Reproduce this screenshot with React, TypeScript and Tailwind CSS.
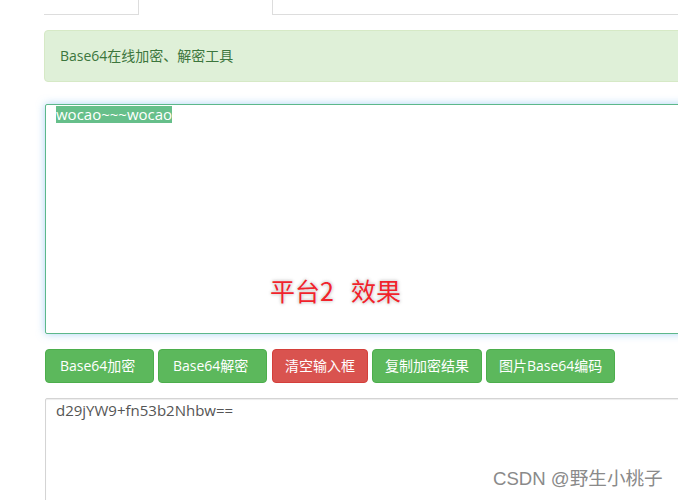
import React from "react";

const font = "font-['Open_Sans','Noto_Sans_CJK_SC',sans-serif]";

export default function App() {
  return (
    <div className={`relative w-[678px] h-[500px] overflow-hidden bg-white ${font}`}>
      <div className="w-[760px] pl-[44px]">
        {/* tabs */}
        <div className="flex h-[15px]">
          <div className="w-[95px] border-r border-b border-[#ddd]" />
          <div className="w-[133px]" />
          <div className="flex-1 border-l border-b border-[#ddd]" />
        </div>

        {/* alert */}
        <div className="mt-[15px] rounded-[4px] border border-[#d6e9c6] bg-[#dff0d8] px-[15px] py-[15px] text-[14px] leading-[20px] text-[#3c763d]">
          Base64在线加密、解密工具
        </div>

        {/* input textarea */}
        <div className="relative ml-px mt-[22px] h-[230px] rounded-[2px] border border-[#5cb88a] bg-white px-[10px] pt-[1px] shadow-[0_0_8px_rgba(102,175,233,0.55)]">
          <div className="w-fit bg-[#66bf8a] text-[15px] leading-[17px] text-white">wocao~~~wocao</div>
          <div className="absolute left-[224px] top-[170px] flex gap-[17px] text-[25px] leading-[30px] text-[#f0232b] font-['Noto_Sans_CJK_SC',sans-serif] [text-shadow:0_0_2px_#fff,0_0_3px_#aaa,0_0_5px_#ddd]">
            <span>平台2</span>
            <span>效果</span>
          </div>
        </div>

        {/* buttons */}
        <div className="ml-px mt-[15px] flex gap-[4px] text-[14px] leading-[20px] text-white">
          <div className="w-[109px] h-[34px] flex items-center pl-[14px] rounded-[4px] border border-[#4cae4c] bg-[#5cb85c]">Base64加密</div>
          <div className="w-[109px] h-[34px] flex items-center pl-[14px] rounded-[4px] border border-[#4cae4c] bg-[#5cb85c]">Base64解密</div>
          <div className="ml-px w-[96px] h-[34px] flex items-center pl-[12px] rounded-[4px] border border-[#d43f3a] bg-[#d9534f]">清空输入框</div>
          <div className="w-[110px] h-[34px] flex items-center pl-[12px] rounded-[4px] border border-[#4cae4c] bg-[#5cb85c]">复制加密结果</div>
          <div className="w-[129px] h-[34px] flex items-center pl-[12px] rounded-[4px] border border-[#4cae4c] bg-[#5cb85c]">图片Base64编码</div>
        </div>

        {/* result textarea */}
        <div className="ml-px mt-[15px] h-[200px] rounded-[2px] border border-[#d4d4d4] bg-white px-[10px] pt-[3px] text-[15px] leading-[17px] text-[#555] shadow-[inset_0_1px_1px_rgba(0,0,0,0.075)]">
          d29jYW9+fn53b2Nhbw==
        </div>
      </div>

      {/* watermark */}
      <div className="absolute left-[493px] top-[468px] text-[18.6px] leading-[22px] text-[#8a8a8a] font-['Liberation_Sans','Noto_Sans_CJK_SC',sans-serif] [text-shadow:0_0_2px_#fff,0_0_2px_#fff]">
        CSDN @野生小桃子
      </div>
    </div>
  );
}
